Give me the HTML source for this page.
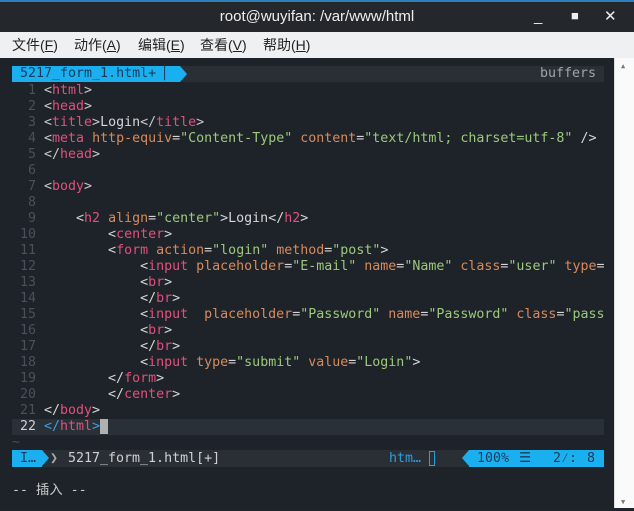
<!DOCTYPE html><html><head><meta charset="utf-8"><style>
*{margin:0;padding:0;box-sizing:border-box}
body{width:634px;height:511px;background:#1f242a;overflow:hidden;position:relative;font-family:"DejaVu Sans Mono","Liberation Mono",monospace;font-size:13.3px}
#title{position:absolute;left:0;top:0;width:634px;height:32px;background:#24282c;border-top:2px solid #2f7fb8;color:#eee;font-family:"Liberation Sans",sans-serif;font-size:15px;text-align:center;line-height:30px}
#menu{position:absolute;left:0;top:32px;width:634px;height:26px;background:#eff0f1;font-family:"Liberation Sans","Noto Sans CJK SC",sans-serif;font-size:14px;line-height:26px;color:#222}
#menu span{position:absolute;top:0}
#term{position:absolute;left:0;top:58px;width:614px;height:450px;background:#1e2329}
#sb{position:absolute;left:614px;top:58px;width:20px;height:450px;background:#fafafa;border-left:1px solid #ddd}
.l{position:absolute;left:0;height:16px;line-height:16px;white-space:pre;color:#d6d6d6;width:604px;margin-top:2px}
.n{position:absolute;width:36px;text-align:right;left:0;color:#4a5058}
.c{position:absolute;left:44px}
.t{color:#e2507a}.a{color:#d98a5a}.s{color:#9cc97a}.p{color:#c8c8c8}
</style></head><body>
<div id="title">root@wuyifan: /var/www/html<span style="position:absolute;left:534px;top:0">_</span><span style="position:absolute;left:571px;top:-1px;font-size:13px">■</span><span style="position:absolute;left:604px;top:0">✕</span></div>
<div id="menu"><span style="left:12px">文件(<u>F</u>)</span><span style="left:74px">动作(<u>A</u>)</span><span style="left:138px">编辑(<u>E</u>)</span><span style="left:200px">查看(<u>V</u>)</span><span style="left:263px">帮助(<u>H</u>)</span></div>
<div id="term"></div>
<div id="sb"><div style="position:absolute;top:4px;left:6px;font-size:7px;color:#777">▲</div><div style="position:absolute;top:440px;left:6px;font-size:7px;color:#777">▼</div></div>
<div style="position:absolute;left:12px;top:66px;width:592px;height:16px;background:#2a2f36"></div>
<div style="position:absolute;left:12px;top:66px;width:168px;height:16px;background:#1ab0f0;color:#1b3a5a;line-height:16px;padding-left:8px;white-space:pre">5217_form_1.html+ ▏</div>
<div style="position:absolute;left:180px;top:66px;width:0;height:0;border-top:8px solid transparent;border-bottom:8px solid transparent;border-left:7px solid #1ab0f0"></div>
<div style="position:absolute;left:540px;top:66px;line-height:16px;color:#a0a4a8">buffers</div>
<div style="position:absolute;left:12px;top:419px;width:592px;height:16px;background:#2a3038"></div>
<div class="l" style="top:81px"><span class="n">1</span><span class="c"><span class="p">&lt;</span><span class="t">html</span><span class="p">&gt;</span></span></div>
<div class="l" style="top:97px"><span class="n">2</span><span class="c"><span class="p">&lt;</span><span class="t">head</span><span class="p">&gt;</span></span></div>
<div class="l" style="top:113px"><span class="n">3</span><span class="c"><span class="p">&lt;</span><span class="t">title</span><span class="p">&gt;</span>Login<span class="p">&lt;/</span><span class="t">title</span><span class="p">&gt;</span></span></div>
<div class="l" style="top:129px"><span class="n">4</span><span class="c"><span class="p">&lt;</span><span class="t">meta</span> <span class="a">http-equiv</span>=<span class="s">"Content-Type"</span> <span class="a">content</span>=<span class="s">"text/html; charset=utf-8"</span> /&gt;</span></div>
<div class="l" style="top:145px"><span class="n">5</span><span class="c"><span class="p">&lt;/</span><span class="t">head</span><span class="p">&gt;</span></span></div>
<div class="l" style="top:161px"><span class="n">6</span></div>
<div class="l" style="top:177px"><span class="n">7</span><span class="c"><span class="p">&lt;</span><span class="t">body</span><span class="p">&gt;</span></span></div>
<div class="l" style="top:193px"><span class="n">8</span></div>
<div class="l" style="top:209px"><span class="n">9</span><span class="c">    &lt;<span class="t">h2</span> <span class="a">align</span>=<span class="s">"center"</span>&gt;Login&lt;/<span class="t">h2</span>&gt;</span></div>
<div class="l" style="top:225px"><span class="n">10</span><span class="c">        &lt;<span class="t">center</span>&gt;</span></div>
<div class="l" style="top:241px"><span class="n">11</span><span class="c">        &lt;<span class="t">form</span> <span class="a">action</span>=<span class="s">"login"</span> <span class="a">method</span>=<span class="s">"post"</span>&gt;</span></div>
<div class="l" style="top:257px"><span class="n">12</span><span class="c">            &lt;<span class="t">input</span> <span class="a">placeholder</span>=<span class="s">"E-mail"</span> <span class="a">name</span>=<span class="s">"Name"</span> <span class="a">class</span>=<span class="s">"user"</span> <span class="a">type</span>=</span></div>
<div class="l" style="top:273px"><span class="n">13</span><span class="c">            &lt;<span class="t">br</span>&gt;</span></div>
<div class="l" style="top:289px"><span class="n">14</span><span class="c">            &lt;/<span class="t">br</span>&gt;</span></div>
<div class="l" style="top:305px"><span class="n">15</span><span class="c">            &lt;<span class="t">input</span>  <span class="a">placeholder</span>=<span class="s">"Password"</span> <span class="a">name</span>=<span class="s">"Password"</span> <span class="a">class</span>=<span class="s">"pass</span></span></div>
<div class="l" style="top:321px"><span class="n">16</span><span class="c">            &lt;<span class="t">br</span>&gt;</span></div>
<div class="l" style="top:337px"><span class="n">17</span><span class="c">            &lt;/<span class="t">br</span>&gt;</span></div>
<div class="l" style="top:353px"><span class="n">18</span><span class="c">            &lt;<span class="t">input</span> <span class="a">type</span>=<span class="s">"submit"</span> <span class="a">value</span>=<span class="s">"Login"</span>&gt;</span></div>
<div class="l" style="top:369px"><span class="n">19</span><span class="c">        &lt;/<span class="t">form</span>&gt;</span></div>
<div class="l" style="top:385px"><span class="n">20</span><span class="c">        &lt;/<span class="t">center</span>&gt;</span></div>
<div class="l" style="top:401px"><span class="n">21</span><span class="c">&lt;/<span class="t">body</span>&gt;</span></div>
<div class="l" style="top:417px"><span class="n" style="color:#d0d0d0">22</span><span class="c"><span style="color:#3aa0e0">&lt;/</span><span class="t">html</span><span style="color:#3aa0e0">&gt;</span><span style="background:#b0b0b0"> </span></span></div>
<div class="l" style="top:433px;left:12px;color:#4a5058">~</div>
<div style="position:absolute;left:12px;top:450px;width:592px;height:17px;background:#2a2f36"></div>
<div style="position:absolute;left:12px;top:450px;width:30px;height:17px;background:#1ab0f0;color:#1b3a5a;line-height:17px;padding-left:8px">I…</div>
<div style="position:absolute;left:42px;top:450px;border-top:8.5px solid transparent;border-bottom:8.5px solid transparent;border-left:7px solid #1ab0f0"></div>
<div style="position:absolute;left:50px;top:450px;line-height:17px;color:#aaa">❯</div>
<div style="position:absolute;left:68px;top:450px;line-height:17px;color:#d0d0d0">5217_form_1.html[+]</div>
<div style="position:absolute;left:389px;top:450px;line-height:17px;color:#2a9ee0">htm…</div>
<div style="position:absolute;left:429px;top:451px;width:6px;height:15px;border:1px solid #2a9ee0"></div>
<div style="position:absolute;left:462px;top:450px;border-top:8.5px solid transparent;border-bottom:8.5px solid transparent;border-right:7px solid #1ab0f0"></div>
<div style="position:absolute;left:469px;top:450px;width:135px;height:17px;background:#1ab0f0;color:#1b3a5a;line-height:17px"><span style="position:absolute;left:8px">100%</span><span style="position:absolute;left:50px">☰</span><span style="position:absolute;left:84px">2⁄:</span><span style="position:absolute;left:118px">8</span></div>
<div style="position:absolute;left:12px;top:482px;line-height:17px;color:#ccc;font-family:'DejaVu Sans Mono','Noto Sans CJK SC',monospace;white-space:pre">-- 插入 --</div>
</body></html>
